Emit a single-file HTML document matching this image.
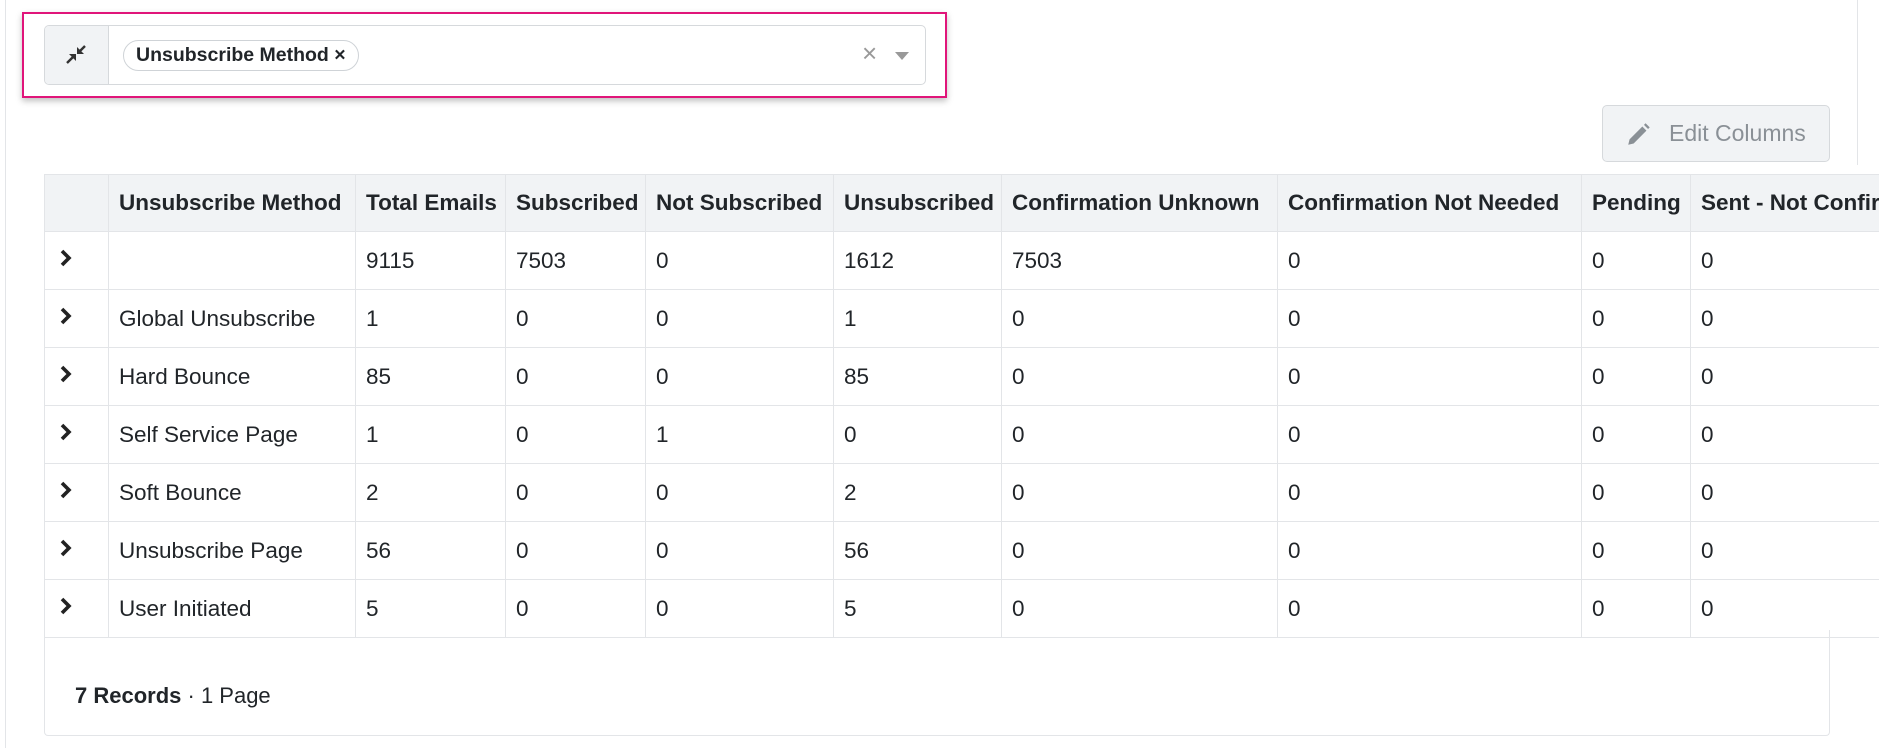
<!DOCTYPE html>
<html><head><style>
*{box-sizing:border-box;margin:0;padding:0}
body{width:1879px;height:748px;overflow:hidden;background:#fff;font-family:"Liberation Sans",sans-serif;color:#212529;position:relative}
.vl{position:absolute;top:0;bottom:0;width:1px;background:#e3e5e8}
.pink{position:absolute;left:22px;top:12px;width:925px;height:86px;border:2px solid #e0157a;box-shadow:0 3px 6px rgba(0,0,0,.25)}
.inp{position:absolute;left:44px;top:25px;width:882px;height:60px;border:1px solid #d6d9dc;border-radius:5px;background:#fff;overflow:hidden}
.addon{position:absolute;left:0;top:0;width:64px;height:100%;background:#f1f3f5;border-right:1px solid #d6d9dc}
.chip{position:absolute;left:78px;top:14px;height:31px;padding:0 12px;border:1px solid #cfd3d7;border-radius:16px;font-weight:bold;font-size:19.5px;line-height:29px}
.btn{position:absolute;left:1602px;top:105px;width:228px;height:57px;border:1px solid #d6d9dc;border-radius:5px;background:#f1f3f5;color:#8a9096;font-size:23px;line-height:55px;padding-left:66px}
.wrap{position:absolute;left:44px;top:630px;width:1786px;height:106px;border:1px solid #e3e5e8;border-top:none;border-radius:0 0 4px 4px}
table{position:absolute;left:44px;top:174px;border-collapse:collapse;font-size:22.5px;table-layout:fixed;width:1866px}
td,th{border:1px solid #e3e5e8;height:58px;padding:0 10px;text-align:left;white-space:nowrap;overflow:hidden}
th{background:#f1f3f5;font-weight:bold;height:57px}
td:first-child{padding-left:14px}
.ft{position:absolute;left:75px;top:683px;font-size:22px}
</style></head><body>
<div class="vl" style="left:5px"></div><div class="vl" style="left:1857px;height:165px"></div>
<div class="pink"></div>
<div class="inp"><div class="addon">
<svg width="64" height="58" viewBox="0 0 64 58"><g stroke="#333" stroke-width="2.4" fill="#333"><line x1="22" y1="37" x2="29" y2="30"/><polygon points="31,28 31,35 24,28" stroke="none"/><line x1="40" y1="20" x2="34" y2="26"/><polygon points="32,28 32,21 39,28" stroke="none"/></g></svg></div>
<div class="chip">Unsubscribe Method <span style="font-weight:bold">×</span></div>
<div style="position:absolute;left:817px;top:12px;font-size:26px;color:#999">×</div>
<div style="position:absolute;left:850px;top:26px;width:0;height:0;border-left:7px solid transparent;border-right:7px solid transparent;border-top:8px solid #999"></div>
</div>
<div class="btn"><svg style="position:absolute;left:22px;top:16px" width="26" height="26" viewBox="0 0 24 24"><path d="M3 21l1.2-5L16 4.2l3.8 3.8L8 19.8z M17.5 2.7l1.5-1.5 3.8 3.8-1.5 1.5z" fill="#8a9096"/></svg>Edit Columns</div>
<div class="wrap"></div>
<table>
<colgroup><col style="width:64px"><col style="width:247px"><col style="width:150px"><col style="width:140px"><col style="width:188px"><col style="width:168px"><col style="width:276px"><col style="width:304px"><col style="width:109px"><col style="width:220px"></colgroup>
<tr><th></th><th>Unsubscribe Method</th><th>Total Emails</th><th>Subscribed</th><th>Not Subscribed</th><th>Unsubscribed</th><th>Confirmation Unknown</th><th>Confirmation Not Needed</th><th>Pending</th><th>Sent - Not Confirmed</th></tr>
<tr><td>C</td><td></td><td>9115</td><td>7503</td><td>0</td><td>1612</td><td>7503</td><td>0</td><td>0</td><td>0</td></tr>
<tr><td>C</td><td>Global Unsubscribe</td><td>1</td><td>0</td><td>0</td><td>1</td><td>0</td><td>0</td><td>0</td><td>0</td></tr>
<tr><td>C</td><td>Hard Bounce</td><td>85</td><td>0</td><td>0</td><td>85</td><td>0</td><td>0</td><td>0</td><td>0</td></tr>
<tr><td>C</td><td>Self Service Page</td><td>1</td><td>0</td><td>1</td><td>0</td><td>0</td><td>0</td><td>0</td><td>0</td></tr>
<tr><td>C</td><td>Soft Bounce</td><td>2</td><td>0</td><td>0</td><td>2</td><td>0</td><td>0</td><td>0</td><td>0</td></tr>
<tr><td>C</td><td>Unsubscribe Page</td><td>56</td><td>0</td><td>0</td><td>56</td><td>0</td><td>0</td><td>0</td><td>0</td></tr>
<tr><td>C</td><td>User Initiated</td><td>5</td><td>0</td><td>0</td><td>5</td><td>0</td><td>0</td><td>0</td><td>0</td></tr>
</table>
<script>
document.querySelectorAll('td:first-child').forEach(function(t){t.innerHTML='<svg width="14" height="20" viewBox="0 0 14 20" style="display:block;margin-top:-5px"><path d="M3 3l7 7-7 7" fill="none" stroke="#222" stroke-width="3.6"/></svg>';});
</script>
<div class="ft"><b>7 Records</b> · 1 Page</div>
</body></html>
